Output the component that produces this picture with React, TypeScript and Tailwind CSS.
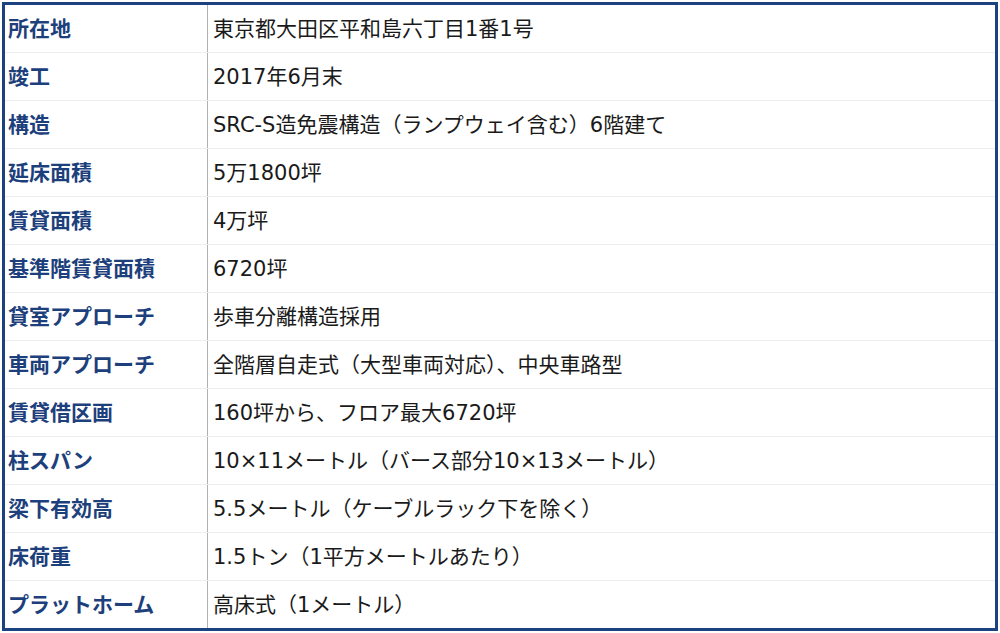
import React from "react";

const rows: [string, string][] = [
  ["所在地", "東京都大田区平和島六丁目1番1号"],
  ["竣工", "2017年6月末"],
  ["構造", "SRC-S造免震構造（ランプウェイ含む）6階建て"],
  ["延床面積", "5万1800坪"],
  ["賃貸面積", "4万坪"],
  ["基準階賃貸面積", "6720坪"],
  ["貸室アプローチ", "歩車分離構造採用"],
  ["車両アプローチ", "全階層自走式（大型車両対応）、中央車路型"],
  ["賃貸借区画", "160坪から、フロア最大6720坪"],
  ["柱スパン", "10×11メートル（バース部分10×13メートル）"],
  ["梁下有効高", "5.5メートル（ケーブルラック下を除く）"],
  ["床荷重", "1.5トン（1平方メートルあたり）"],
  ["プラットホーム", "高床式（1メートル）"],
];

export default function App() {
  return (
    <div
      className="w-[1000px] h-[633px] bg-white p-[2px]"
      style={{ fontFamily: '"DejaVu Sans", "Noto Sans CJK JP", sans-serif' }}
    >
      <div className="h-[629px] border-[3px] border-[#1d4281] flex flex-col">
        {rows.map(([k, v], i) => (
          <div
            key={k}
            className={`flex flex-1 ${i < rows.length - 1 ? "border-b border-[#eeeeee]" : ""}`}
          >
            <div className="w-[203px] border-r border-[#b0b0b0] flex items-center pl-[3px] pt-[2px] text-[21px] font-semibold text-[#1d3f7c]">
              {k}
            </div>
            <div className="flex-1 flex items-center pl-[5px] pt-[2px] text-[21px] text-[#1a1a1a]">
              {v}
            </div>
          </div>
        ))}
      </div>
    </div>
  );
}
